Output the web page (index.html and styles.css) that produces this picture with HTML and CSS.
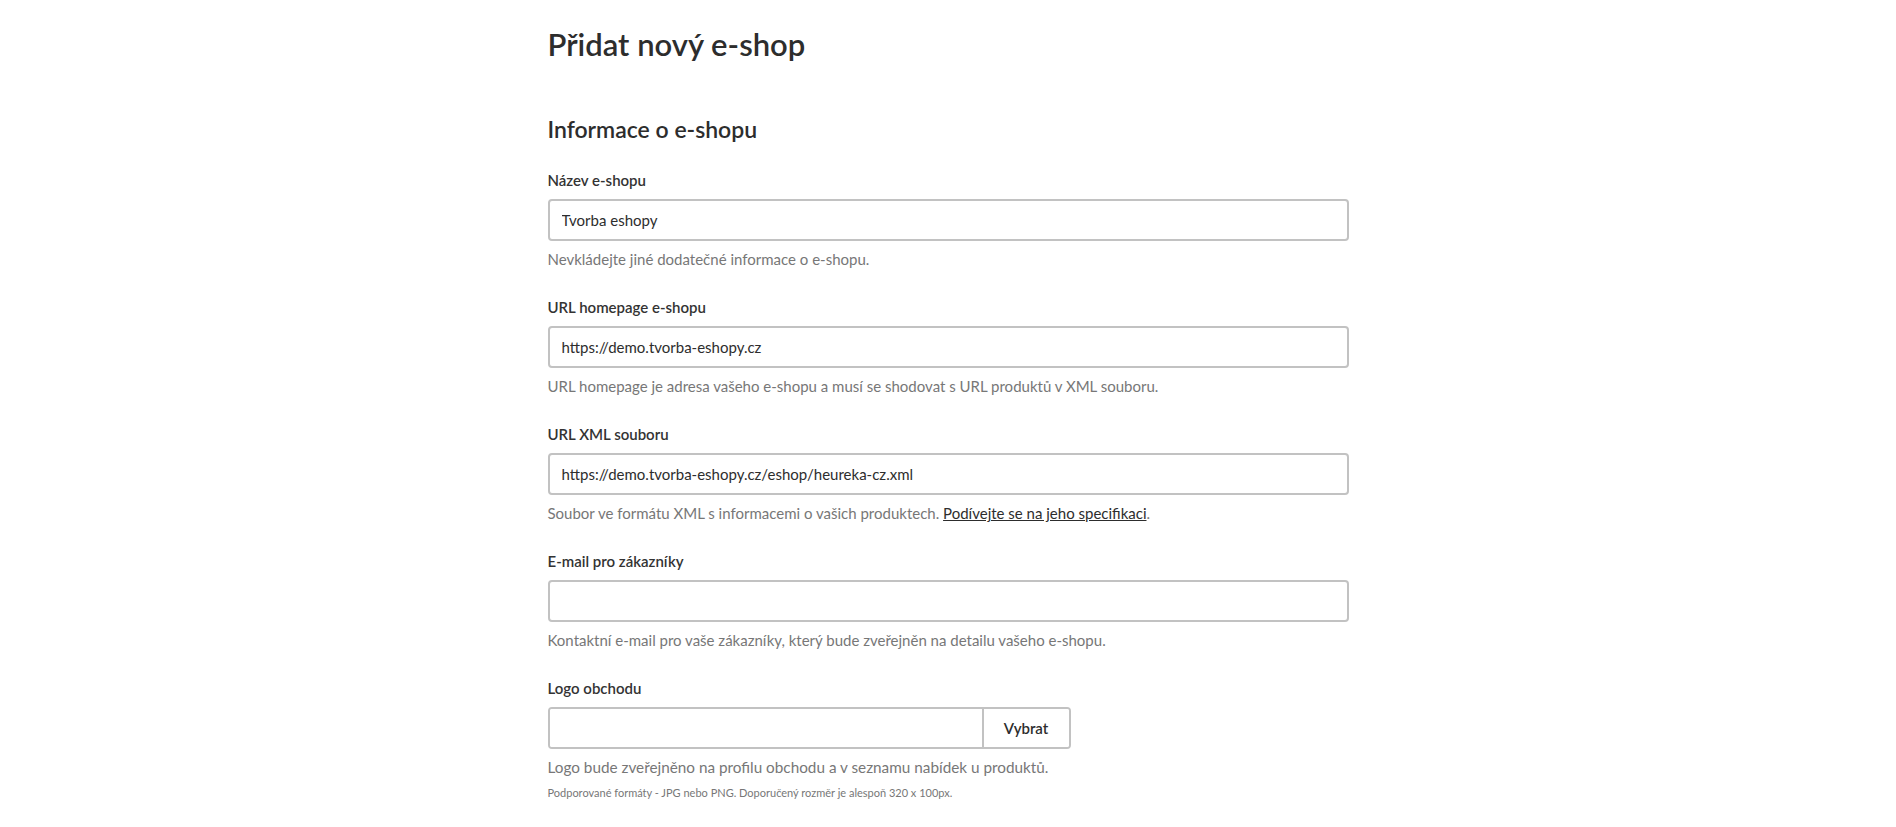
FILE: index.html
```html
<!DOCTYPE html>
<html lang="cs">
<head>
  <meta charset="UTF-8" />
  <meta name="viewport" content="width=device-width, initial-scale=1.0"/>
  <title>Přidat nový e-shop</title>
  <link rel="stylesheet" href="styles.css">
</head>
<body>

  <div class="page">
    <h1>Přidat nový e-shop</h1>
    <h2>Informace o e-shopu</h2>

    <div class="field">
      <label for="name">Název e-shopu</label>
      <input type="text" id="name" value="Tvorba eshopy">
      <p class="help">Nevkládejte jiné dodatečné informace o e-shopu.</p>
    </div>

    <div class="field">
      <label for="url">URL homepage e-shopu</label>
      <input type="text" id="url" value="https://demo.tvorba-eshopy.cz">
      <p class="help">URL homepage je adresa vašeho e-shopu a musí se shodovat s URL produktů v XML souboru.</p>
    </div>

    <div class="field">
      <label for="xml">URL XML souboru</label>
      <input type="text" id="xml" value="https://demo.tvorba-eshopy.cz/eshop/heureka-cz.xml">
      <p class="help">Soubor ve formátu XML s informacemi o vašich produktech. <a href="#">Podívejte se na jeho specifikaci</a>.</p>
    </div>

    <div class="field">
      <label for="email">E-mail pro zákazníky</label>
      <input type="text" id="email" value="">
      <p class="help">Kontaktní e-mail pro vaše zákazníky, který bude zveřejněn na detailu vašeho e-shopu.</p>
    </div>

    <div class="field">
      <label for="logo">Logo obchodu</label>
      <div class="file-box">
        <input type="text" id="logo" class="file-name" value="">
        <button type="button" class="file-btn">Vybrat</button>
      </div>
      <p class="help help-big">Logo bude zveřejněno na profilu obchodu a v seznamu nabídek u produktů.</p>
      <p class="help-small">Podporované formáty - JPG nebo PNG. Doporučený rozměr je alespoň 320 x 100px.</p>
    </div>
  </div>

</body>
</html>
```

FILE: styles.css
```css
body {
  margin: 0;
  font-family: 'Lato', 'Open Sans', sans-serif;
  color: #2d2d2d;
  background: #fff;
}
.page {
  width: 801px;
  margin: 0 auto;
  padding-top: 24px;
}
h1 {
  margin: 0 0 50px;
  font-size: 31px;
  line-height: 40px;
  font-weight: 600;
}
h2 {
  margin: 0 0 26px;
  font-size: 23px;
  line-height: 30px;
  font-weight: 600;
}
.field {
  margin-bottom: 28px;
}
label {
  display: block;
  margin-bottom: 9px;
  font-size: 15px;
  line-height: 20px;
  font-weight: 600;
  color: #333;
}
input {
  display: block;
  box-sizing: border-box;
  width: 100%;
  height: 42px;
  padding: 0 12px;
  border: 2px solid #c2c2c2;
  border-radius: 4px;
  font-family: inherit;
  font-size: 15px;
  color: #2d2d2d;
  background: #fff;
}
.help {
  margin: 8px 0 0;
  font-size: 15px;
  line-height: 20px;
  color: #777;
}
.help a {
  color: #2d2d2d;
}
.help-big {
  font-size: 15.3px;
}
.help-small {
  margin: 9px 0 0;
  font-size: 11px;
  line-height: 14px;
  color: #777;
}
.file-box {
  display: flex;
  width: 523px;
  height: 42px;
  box-sizing: border-box;
  border: 2px solid #c2c2c2;
  border-radius: 4px;
  overflow: hidden;
}
.file-name {
  flex: 1;
  height: 38px;
  border: none;
  border-radius: 0;
}
.file-btn {
  width: 87px;
  border: none;
  border-left: 2px solid #c2c2c2;
  background: #fff;
  font-family: inherit;
  font-size: 15px;
  font-weight: 600;
  color: #2d2d2d;
  cursor: pointer;
}
```
